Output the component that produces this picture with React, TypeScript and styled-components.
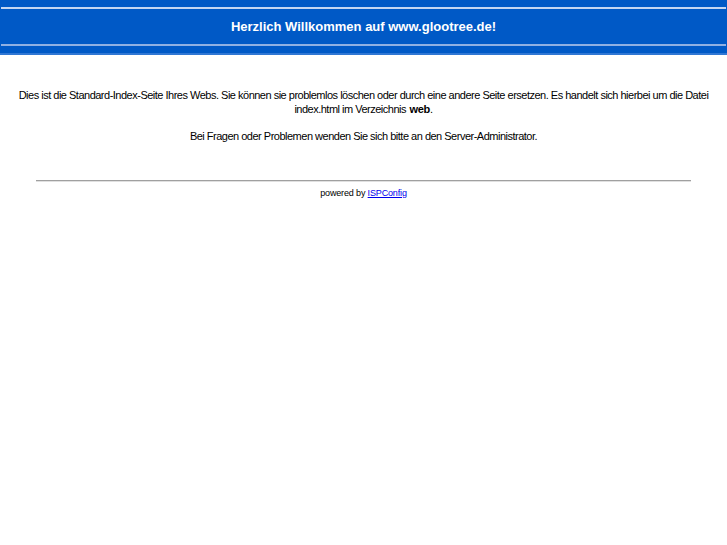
import React from 'react'
import styled, { createGlobalStyle } from 'styled-components'

const Global = createGlobalStyle`
  body {
    margin: 0;
    background: #ffffff;
    font-family: "Liberation Sans", Arial, sans-serif;
    color: #000000;
  }
`

const Header = styled.div`
  background: #0059c6;
  border-bottom: 2px solid #3077d4;
  padding: 7px 1px 7px 1px;
`

const Rule = styled.div<{ tone: string }>`
  height: 2px;
  background: ${p => p.tone};
`

const Title = styled.h1`
  margin: 0;
  height: 35px;
  display: flex;
  align-items: center;
  justify-content: center;
  color: #ffffff;
  font-size: 13px;
  font-weight: bold;
`

const Content = styled.div`
  padding: 33px 8px 0;
  text-align: center;
  font-size: 11px;
  line-height: 14px;
  letter-spacing: -0.5px;
`

const Para = styled.p`
  margin: 0 0 13px;
`

const Strong = styled.b`
  margin-left: 1px;
  letter-spacing: -0.3px;
`

const Footer = styled.div`
  margin-top: 37px;
  text-align: center;
`

const Line = styled.hr`
  width: 90%;
  margin: 0 auto;
  border: none;
  border-top: 1px solid #a0a0a0;
  border-bottom: 1px solid #e0e0e0;
`

const Powered = styled.div`
  margin-top: 5px;
  font-size: 9px;
  line-height: 12px;
  letter-spacing: -0.15px;
  a {
    color: #0000ee;
  }
`

export default function App() {
  return (
    <>
      <Global />
      <Header>
        <Rule tone="#c4d6f2" />
        <Title>Herzlich Willkommen auf www.glootree.de!</Title>
        <Rule tone="#8fb0e3" />
      </Header>
      <Content>
        <Para>
          Dies ist die Standard-Index-Seite Ihres Webs. Sie können sie problemlos löschen oder durch eine andere Seite ersetzen. Es handelt sich hierbei um die Datei index.html im Verzeichnis <Strong>web</Strong>.
        </Para>
        <Para>Bei Fragen oder Problemen wenden Sie sich bitte an den Server-Administrator.</Para>
      </Content>
      <Footer>
        <Line />
        <Powered>
          powered by <a href="#">ISPConfig</a>
        </Powered>
      </Footer>
    </>
  )
}
